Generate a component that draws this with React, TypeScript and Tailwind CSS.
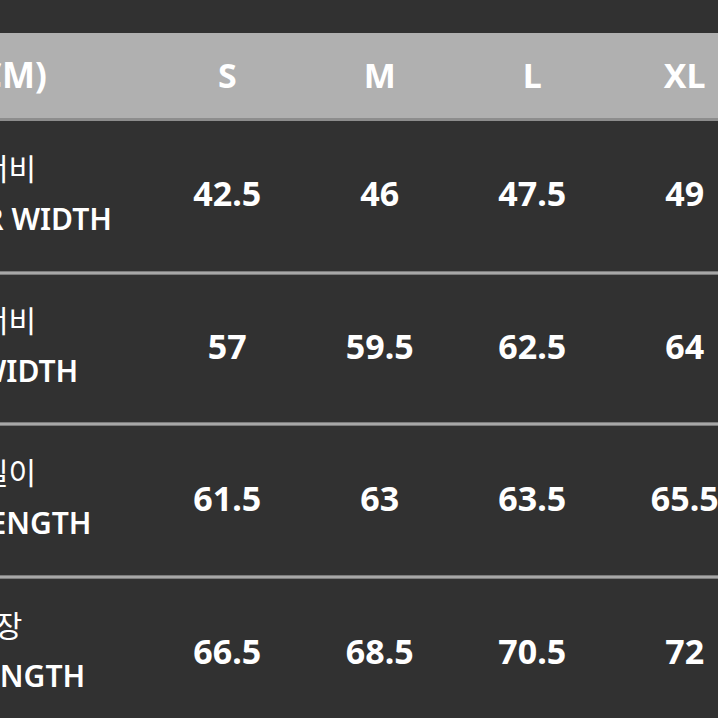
import React from "react";

const rows = [
  { ko: "어깨너비", en: "SHOULDER WIDTH", enPad: "", v: ["42.5", "46", "47.5", "49"], h: "h-[150px]" },
  { ko: "가슴너비", en: "CHEST WIDTH", enPad: "", v: ["57", "59.5", "62.5", "64"], h: "h-[147px]" },
  { ko: "전체길이", en: "TOTAL LENGTH", enPad: "pl-[10px]", v: ["61.5", "63", "63.5", "65.5"], h: "h-[149px]" },
  { ko: "소매장", en: "SLEEVE LENGTH", enPad: "pr-[14px]", v: ["66.5", "68.5", "70.5", "72"], h: "h-[149px]" },
];

const sizes = ["S", "M", "L", "XL"];

function Divider() {
  return <div className="h-[4px] border-y border-[#7c7c7c] bg-[#a7a7a7]" />;
}

export default function App() {
  return (
    <div className="w-[718px] h-[718px] overflow-hidden bg-[#313131] text-white font-['Noto_Sans','Noto_Sans_CJK_KR',sans-serif]">
      <div className="h-[33px]" />
      <div className="ml-[-195px] w-[956px]">
        <div className="grid grid-cols-[346px_repeat(4,152.5px)] h-[85px] items-center bg-[#b0b0b0] text-[34px] font-bold">
          <div className="text-center pr-[14px] text-[35px]">SIZE(CM)</div>
          {sizes.map((s) => (
            <div key={s} className="text-center">
              {s}
            </div>
          ))}
        </div>
        <div className="h-[3px] bg-[#8d8d8d]" />
        {rows.map((r, i) => (
          <div key={r.en}>
            {i > 0 && <Divider />}
            <div className={`grid grid-cols-[346px_repeat(4,152.5px)] items-center ${r.h}`}>
              <div className="flex flex-col items-center pb-[5px]">
                <div className="text-[30px] leading-[50px] font-normal pl-[6px]">{r.ko}</div>
                <div className={`text-[30px] leading-[50px] font-semibold ${r.enPad}`}>{r.en}</div>
              </div>
              {r.v.map((v, j) => (
                <div key={j} className="text-center text-[34px] font-bold pb-[5px]">
                  {v}
                </div>
              ))}
            </div>
          </div>
        ))}
      </div>
    </div>
  );
}
